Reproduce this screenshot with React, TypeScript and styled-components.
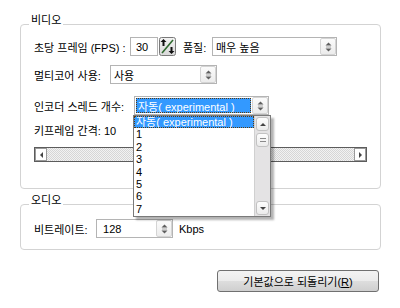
import React from 'react';
import styled, { createGlobalStyle } from 'styled-components';

const GlobalStyle = createGlobalStyle`
  body {
    margin: 0;
    background: #fff;
    font-family: "Liberation Sans", "Noto Sans CJK KR", sans-serif;
    font-size: 11px;
    color: #000;
  }
`;

const Page = styled.div`
  width: 400px;
  height: 308px;
  padding: 0 19px 0 20px;
  box-sizing: border-box;
  display: flex;
  flex-direction: column;
`;

const Group = styled.div<{ $top: number; $bottom: number }>`
  position: relative;
  margin-top: ${(p) => p.$top}px;
  padding: 0 13px ${(p) => p.$bottom}px 13px;
  border: 1px solid #d3d3d3;
  border-radius: 4px;
  display: flex;
  flex-direction: column;
`;

const Legend = styled.span`
  position: absolute;
  top: -11px;
  left: 8px;
  padding: 0 2px;
  line-height: 12px;
  background: #fff;
`;

const Row = styled.div<{ $top: number; $height?: number }>`
  margin-top: ${(p) => p.$top}px;
  height: ${(p) => p.$height ?? 19}px;
  display: flex;
  align-items: center;
`;

const Label = styled.span<{ $width?: number; $pad?: number }>`
  width: ${(p) => (p.$width ? `${p.$width}px` : 'auto')};
  padding-left: ${(p) => p.$pad ?? 0}px;
  box-sizing: border-box;
  white-space: nowrap;
  flex-shrink: 0;
`;

const Combo = styled.div<{ $width: number }>`
  position: relative;
  width: ${(p) => p.$width}px;
  height: 19px;
  box-sizing: border-box;
  border: 1px solid #b4b4b4;
  background: #fff;
  display: flex;
  align-items: stretch;
`;

const ComboText = styled.div<{ $selected?: boolean }>`
  flex: 1;
  margin: 1px;
  padding-left: 2px;
  display: flex;
  align-items: center;
  white-space: nowrap;
  overflow: hidden;
  background: ${(p) => (p.$selected ? '#3399ff' : 'transparent')};
  color: ${(p) => (p.$selected ? '#fff' : '#000')};
  outline: ${(p) => (p.$selected ? '1px dotted #5a3a10' : 'none')};
  outline-offset: -1px;
`;

const DropButton = styled.div`
  width: 16px;
  box-sizing: border-box;
  border: 1px solid #d4d4d4;
  border-radius: 2px;
  background: linear-gradient(#fbfbfb, #ececec);
  display: flex;
  align-items: center;
  justify-content: center;
`;

const SpinInput = styled.div<{ $width: number }>`
  width: ${(p) => p.$width}px;
  height: 19px;
  box-sizing: border-box;
  border: 1px solid #b4b4b4;
  background: #fff;
  display: flex;
  align-items: center;
  padding-left: 5px;
`;

const FpsSpin = styled.div`
  display: flex;
  align-items: center;
  gap: 1px;
`;

const Unit = styled.span`
  margin-left: 6px;
`;

const HScroll = styled.div`
  width: 333px;
  height: 15px;
  box-sizing: border-box;
  border: 1px solid #5c5c5c;
  display: flex;
  background: repeating-conic-gradient(#d6d6d6 0 25%, #f2f2f2 0 50%) 0 0 / 2px 2px;
`;

const HScrollButton = styled.div`
  width: 12px;
  box-sizing: border-box;
  border: 1px solid #9a9a9a;
  background: #fff;
  display: flex;
  align-items: center;
  justify-content: center;
`;

const HTrack = styled.div`
  flex: 1;
`;

const DropList = styled.div`
  position: absolute;
  top: calc(100% + 1px);
  left: -2px;
  width: 138px;
  height: 102px;
  box-sizing: border-box;
  border: 1px solid #7a7a7a;
  background: #fff;
  box-shadow: 3px 3px 2px rgba(0, 0, 0, 0.3);
  display: flex;
  z-index: 10;
`;

const Items = styled.div`
  flex: 1;
  display: flex;
  flex-direction: column;
`;

const Item = styled.div<{ $active?: boolean }>`
  height: 12.4px;
  line-height: 12.4px;
  padding-left: 2px;
  white-space: nowrap;
  background: ${(p) => (p.$active ? '#3399ff' : 'transparent')};
  color: ${(p) => (p.$active ? '#fff' : '#000')};
  outline: ${(p) => (p.$active ? '1px dotted #5a3a10' : 'none')};
  outline-offset: -1px;
`;

const VScroll = styled.div`
  width: 16px;
  background: #e4e3e4;
  border-left: 1px solid #d0d0d0;
  display: flex;
  flex-direction: column;
  justify-content: space-between;
  padding: 1px 0;
  box-sizing: border-box;
`;

const VScrollTop = styled.div`
  display: flex;
  flex-direction: column;
  gap: 2px;
`;

const VButton = styled.div`
  height: 14px;
  margin: 0 1px;
  box-sizing: border-box;
  border: 1px solid #c2c2c2;
  border-radius: 3px;
  background: linear-gradient(#fdfdfd, #ebebeb);
  display: flex;
  align-items: center;
  justify-content: center;
`;

const Footer = styled.div`
  margin-top: 20px;
  display: flex;
  justify-content: flex-end;
  padding-right: 2px;
`;

const ResetButton = styled.button`
  width: 162px;
  height: 22px;
  padding: 0;
  border: 1px solid #707070;
  border-radius: 3px;
  background: linear-gradient(#f3f3f3 0%, #ebebeb 50%, #dddddd 51%, #cfcfcf 100%);
  font-family: "Liberation Sans", "Noto Sans CJK KR", sans-serif;
  font-size: 11px;
  color: #000;
`;

const UpDownGlyph = () => (
  <svg width="7" height="10" viewBox="0 0 7 10">
    <path d="M3.5 0.5 L6.5 3.5 H0.5Z" fill="#5e5e5e" />
    <rect x="1" y="4.5" width="5" height="1" fill="#a8a8a8" />
    <path d="M0.5 6.5 H6.5 L3.5 9.5Z" fill="#5e5e5e" />
  </svg>
);

const FpsIcon = () => (
  <svg width="17" height="19" viewBox="0 0 17 19">
    <defs>
      <linearGradient id="fpsbg" x1="0" y1="0" x2="0" y2="1">
        <stop offset="0" stopColor="#f4f4f4" />
        <stop offset="1" stopColor="#d8d8d8" />
      </linearGradient>
    </defs>
    <rect x="0.5" y="0.5" width="16" height="18" rx="2" fill="url(#fpsbg)" stroke="#7a7a7a" />
    <line x1="3" y1="16" x2="14" y2="3" stroke="#2f6a2f" strokeWidth="1.6" />
    <path d="M4.5 2 L7.5 5 H5.5 V9 H3.5 V5 H1.5Z" fill="#111" />
    <path d="M11.5 10 H13.5 V14 H15.5 L12.5 17 L9.5 14 H11.5Z" fill="#111" />
  </svg>
);

const Tri = ({ dir }: { dir: 'left' | 'right' | 'up' | 'down' }) => {
  const d = {
    left: 'M1 3 L4 0 V6Z',
    right: 'M4 3 L1 0 V6Z',
    up: 'M0 4 L3 1 L6 4Z',
    down: 'M0 1 L6 1 L3 4Z',
  }[dir];
  const w = dir === 'left' || dir === 'right' ? 5 : 6;
  const h = dir === 'left' || dir === 'right' ? 6 : 5;
  return (
    <svg width={w} height={h} viewBox={`0 0 ${w} ${h}`}>
      <path d={d} fill="#444" />
    </svg>
  );
};

const GripGlyph = () => (
  <svg width="6" height="4" viewBox="0 0 6 4">
    <rect x="0" y="0" width="6" height="1" fill="#8a8a8a" />
    <rect x="0" y="3" width="6" height="1" fill="#8a8a8a" />
  </svg>
);

const threadOptions = ['1', '2', '3', '4', '5', '6', '7'];

const App = () => {
  return (
    <>
      <GlobalStyle />
      <Page>
        <Group $top={24} $bottom={26}>
          <Legend>비디오</Legend>
          <Row $top={12}>
            <Label $width={96}>초당 프레임 (FPS) :</Label>
            <FpsSpin>
              <SpinInput $width={28}>30</SpinInput>
              <FpsIcon />
            </FpsSpin>
            <Label $width={36} $pad={7}>품질:</Label>
            <Combo $width={125}>
              <ComboText>매우 높음</ComboText>
              <DropButton><UpDownGlyph /></DropButton>
            </Combo>
          </Row>
          <Row $top={9}>
            <Label $width={76}>멀티코어 사용:</Label>
            <Combo $width={107}>
              <ComboText>사용</ComboText>
              <DropButton><UpDownGlyph /></DropButton>
            </Combo>
          </Row>
          <Row $top={12}>
            <Label $width={100}>인코더 스레드 개수:</Label>
            <Combo $width={135}>
              <ComboText $selected>자동( experimental )</ComboText>
              <DropButton><UpDownGlyph /></DropButton>
              <DropList>
                <Items>
                  <Item $active>자동( experimental )</Item>
                  {threadOptions.map((n) => (
                    <Item key={n}>{n}</Item>
                  ))}
                </Items>
                <VScroll>
                  <VScrollTop>
                    <VButton><Tri dir="up" /></VButton>
                    <VButton><GripGlyph /></VButton>
                  </VScrollTop>
                  <VButton><Tri dir="down" /></VButton>
                </VScroll>
              </DropList>
            </Combo>
          </Row>
          <Row $top={7} $height={16}>
            <Label>키프레임 간격: 10</Label>
          </Row>
          <Row $top={9} $height={15}>
            <HScroll>
              <HScrollButton><Tri dir="left" /></HScrollButton>
              <HTrack />
              <HScrollButton><Tri dir="right" /></HScrollButton>
            </HScroll>
          </Row>
        </Group>
        <Group $top={15} $bottom={11}>
          <Legend>오디오</Legend>
          <Row $top={14}>
            <Label $width={62}>비트레이트:</Label>
            <Combo $width={77}>
              <ComboText>&nbsp;128</ComboText>
              <DropButton><UpDownGlyph /></DropButton>
            </Combo>
            <Unit>Kbps</Unit>
          </Row>
        </Group>
        <Footer>
          <ResetButton>
            기본값으로 되돌리기(<u>R</u>)
          </ResetButton>
        </Footer>
      </Page>
    </>
  );
};

export default App;
